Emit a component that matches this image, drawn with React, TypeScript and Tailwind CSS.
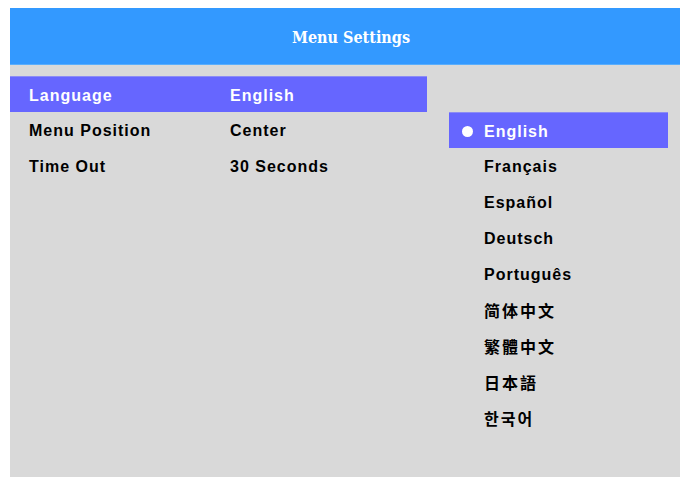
import React from "react";

const settings = [
    { label: "Language", value: "English", active: true },
    { label: "Menu Position", value: "Center", active: false },
    { label: "Time Out", value: "30 Seconds", active: false },
];

const languages = [
    "English",
    "Français",
    "Español",
    "Deutsch",
    "Português",
    "简体中文",
    "繁體中文",
    "日本語",
    "한국어",
];

export default function App() {
    return (
        <div className="w-[680px] h-[477px] bg-white pt-[8px] pl-[10px] overflow-hidden">
            <div className="flex flex-col h-full">
                <div className="h-[57px] bg-[#3399ff] border-b border-[#5aaefc] flex items-center justify-center pl-[12px] pt-[4px]">
                    <span
                        className="text-white font-bold text-[16px]"
                        style={{ fontFamily: '"DejaVu Serif Condensed", "DejaVu Serif", serif' }}
                    >
                        Menu Settings
                    </span>
                </div>

                <div
                    className="flex-1 bg-[#d9d9d9] flex text-[16px] font-bold tracking-[1px]"
                    style={{ fontFamily: '"Liberation Sans", Arial, "Noto Sans CJK SC", sans-serif' }}
                >
                    <div className="w-[417px] pt-[11px]">
                        {settings.map((row) => (
                            <div
                                key={row.label}
                                className={`h-[36px] flex items-center pl-[19px] pt-[2px] ${row.active ? "bg-[#6666ff] text-white border-t border-[#8c8cf5]" : "text-black"}`}
                            >
                                <span className="w-[201px]">{row.label}</span>
                                <span>{row.value}</span>
                            </div>
                        ))}
                    </div>

                    <div className="w-[219px] ml-[22px] pt-[47px]">
                        {languages.map((lang, i) => (
                            <div
                                key={lang}
                                className={`h-[36px] flex items-center ${i < 5 ? "pt-[2px]" : ""} ${i === 0 ? "bg-[#6666ff] text-white border-t border-[#8c8cf5]" : "text-black"}`}
                            >
                                <span className="w-[35px] flex justify-center pl-[1px]">
                                    {i === 0 && <span className="w-[11px] h-[11px] rounded-full bg-white" />}
                                </span>
                                <span
                                    className={i >= 5 ? "tracking-[2px]" : ""}
                                    style={i >= 5 ? { fontFamily: '"Noto Sans CJK SC", "Noto Sans CJK KR", sans-serif' } : undefined}
                                >
                                    {lang}
                                </span>
                            </div>
                        ))}
                    </div>
                </div>
            </div>
        </div>
    );
}
